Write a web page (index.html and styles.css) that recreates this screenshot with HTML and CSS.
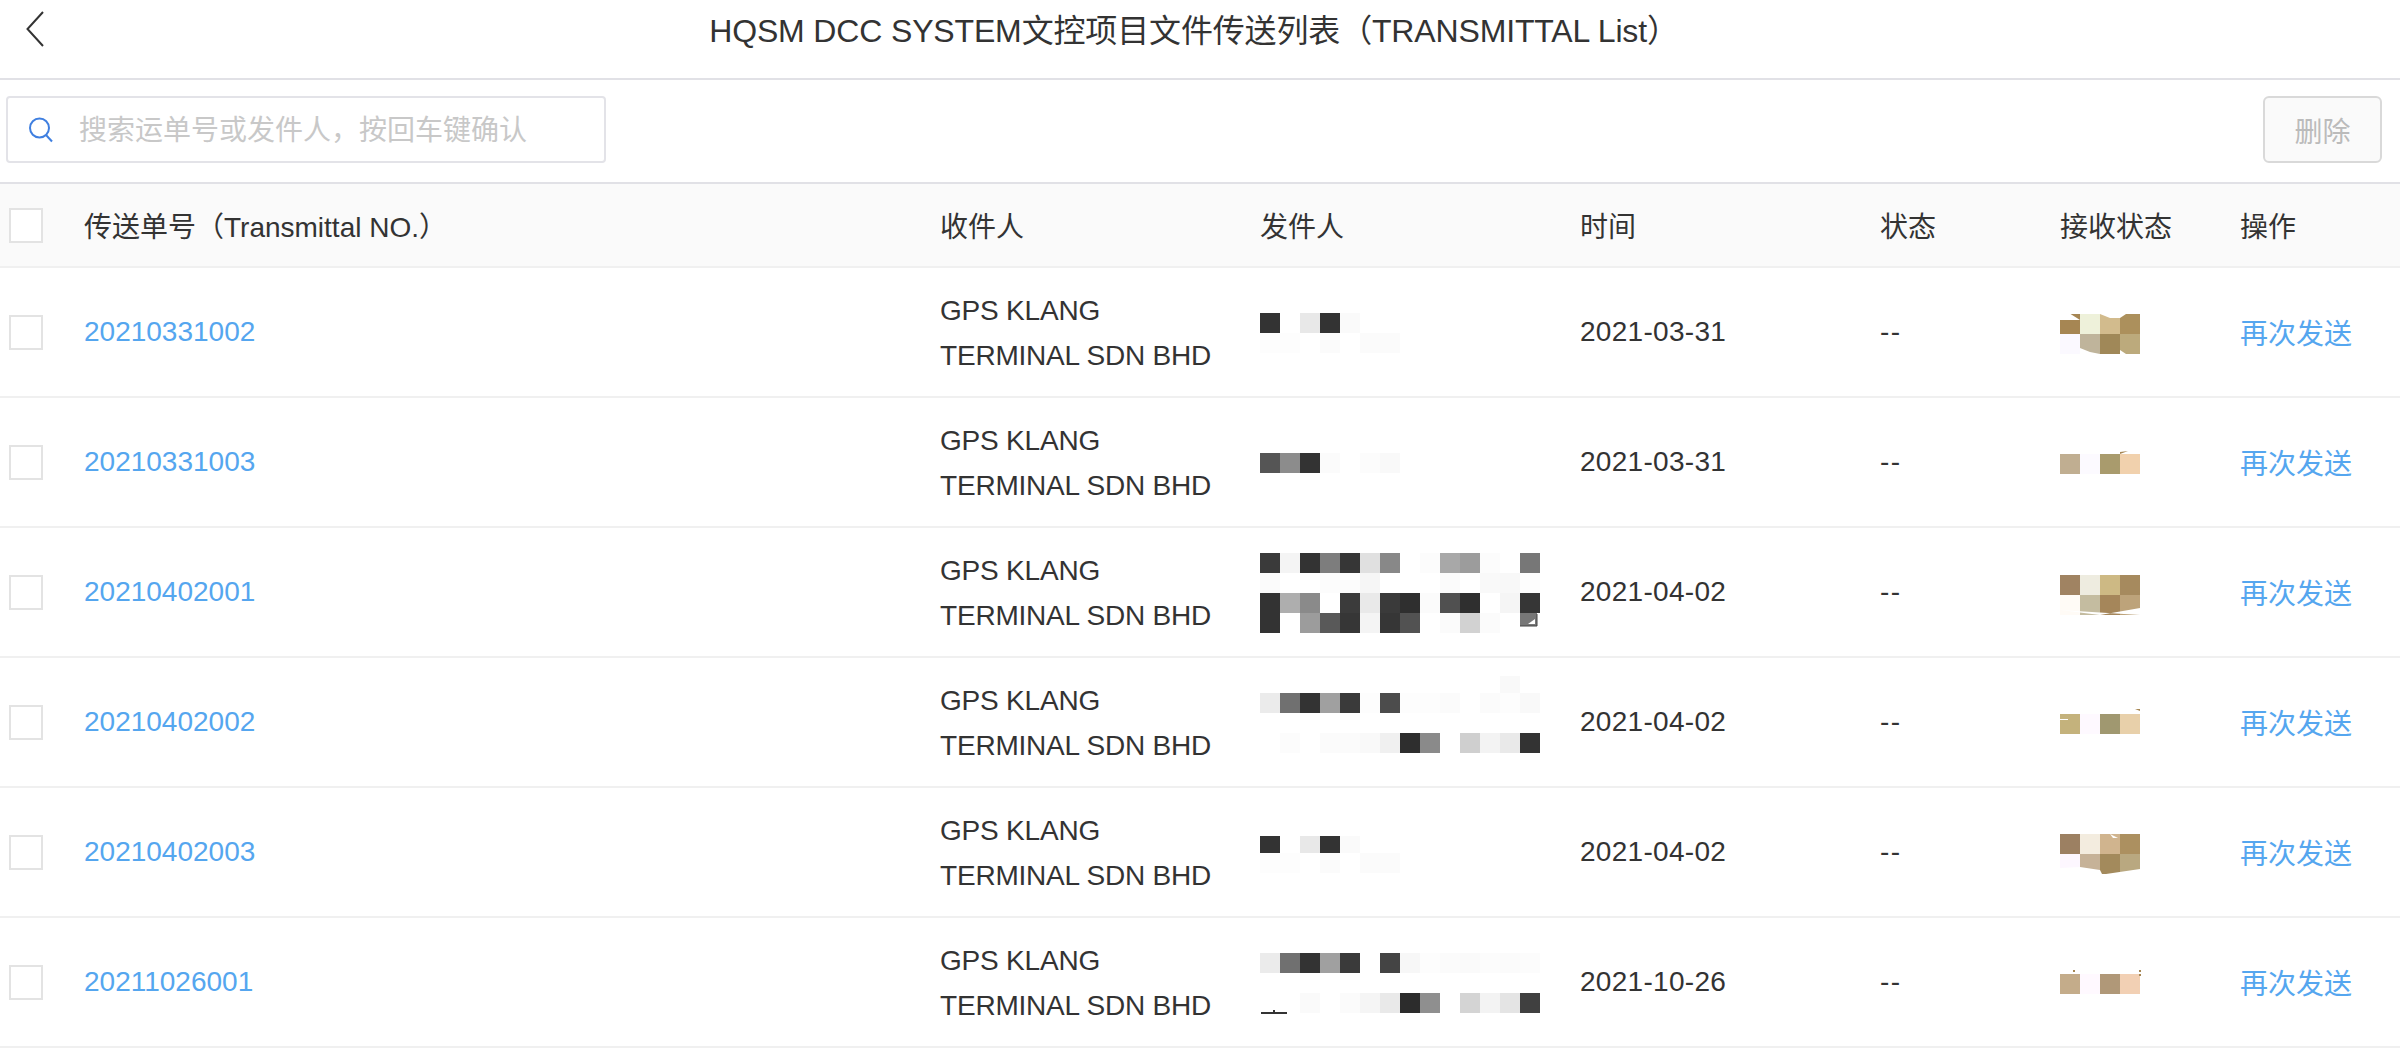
FILE: index.html
```html
<!DOCTYPE html>
<html>
<head>
    <meta charset="utf-8">
    <title>HQSM DCC SYSTEM</title>
    <link rel="stylesheet" href="styles.css">
</head>
<body>
    <div class="top-bar">
        <svg class="back-icon" width="18" height="36" viewBox="0 0 18 36"><path d="M17 1 L1.5 18 L17 35" fill="none" stroke="#333" stroke-width="2"/></svg>
        <div class="page-title">HQSM DCC SYSTEM文控项目文件传送列表（TRANSMITTAL List）</div>
    </div>
    <div class="toolbar">
        <div class="search-box">
            <svg class="search-icon" width="26" height="26" viewBox="0 0 26 26"><circle cx="11.5" cy="11" r="9.5" fill="none" stroke="#3f7fe0" stroke-width="2"/><path d="M18 18 L24 24.5" stroke="#3f7fe0" stroke-width="2" fill="none"/></svg>
            <input class="search-input" type="text" placeholder="搜索运单号或发件人，按回车键确认">
        </div>
        <button class="delete-btn">删除</button>
    </div>

    <div class="row head-row">
        <div class="check-cell"><input class="check" type="checkbox"></div>
        <div>传送单号（Transmittal NO.）</div>
        <div>收件人</div>
        <div>发件人</div>
        <div>时间</div>
        <div>状态</div>
        <div>接收状态</div>
        <div>操作</div>
    </div>

    <div class="row">
        <div class="check-cell"><input class="check" type="checkbox"></div>
        <div><a class="link">20210331002</a></div>
        <div class="receiver">GPS KLANG<br>TERMINAL SDN BHD</div>
        <div class="mosaic-cell">
            <svg class="mosaic" width="300" height="128">
                <rect class="px" x="0" y="45" fill="#333"/><rect class="px" x="40" y="45" fill="#e8e8e8"/><rect class="px" x="60" y="45" fill="#333"/><rect class="px" x="80" y="45" fill="#fafafa"/>
                <rect class="px" x="0" y="65" fill="#fdfdfd"/><rect class="px" x="20" y="65" fill="#fdfdfd"/><rect class="px" x="60" y="65" fill="#fbfbfb"/><rect class="px" x="100" y="65" fill="#fbfbfb"/><rect class="px" x="120" y="65" fill="#fbfbfb"/>
            </svg>
        </div>
        <div class="date">2021-03-31</div>
        <div class="dash">--</div>
        <div class="mosaic-cell">
            <svg class="mosaic" width="100" height="128">
                <rect class="px" x="0" y="46" fill="#a68653"/><rect class="px" x="20" y="46" fill="#eef1da"/><rect class="px" x="40" y="46" fill="#d2bb8d"/><rect class="px" x="60" y="46" fill="#ac905c"/>
                <rect class="px" x="0" y="66" fill="#fbf9ff"/><rect class="px" x="20" y="66" fill="#bfb49b"/><rect class="px" x="40" y="66" fill="#a08858"/><rect class="px" x="60" y="66" fill="#bcaa7c"/>
                <polygon points="0,45 9,45 20,52 0,52" fill="#fff"/><polygon points="40,46 50,50 60,50 66,46 40,44" fill="#fff"/><polygon points="20,80 30,84 40,86 40,87 20,87" fill="#fff"/><polygon points="60,82 66,86 60,87" fill="#fff"/>
            </svg>
        </div>
        <div><a class="link">再次发送</a></div>
    </div>

    <div class="row">
        <div class="check-cell"><input class="check" type="checkbox"></div>
        <div><a class="link">20210331003</a></div>
        <div class="receiver">GPS KLANG<br>TERMINAL SDN BHD</div>
        <div class="mosaic-cell">
            <svg class="mosaic" width="300" height="128">
                <rect class="px" x="0" y="55" fill="#555"/><rect class="px" x="20" y="55" fill="#8c8c8c"/><rect class="px" x="40" y="55" fill="#333"/><rect class="px" x="60" y="55" fill="#fbfbfb"/><rect class="px" x="100" y="55" fill="#fcfcfc"/><rect class="px" x="120" y="55" fill="#f9f9f9"/>
            </svg>
        </div>
        <div class="date">2021-03-31</div>
        <div class="dash">--</div>
        <div class="mosaic-cell">
            <svg class="mosaic" width="100" height="128">
                <rect class="px" x="0" y="56" fill="#c0ae91"/><rect class="px" x="20" y="56" fill="#fcfaff"/><rect class="px" x="40" y="56" fill="#a99b6d"/><rect class="px" x="60" y="56" fill="#f1d1ad"/>
                <polygon points="60,54 68,53 60,56" fill="#a68653"/>
            </svg>
        </div>
        <div><a class="link">再次发送</a></div>
    </div>

    <div class="row">
        <div class="check-cell"><input class="check" type="checkbox"></div>
        <div><a class="link">20210402001</a></div>
        <div class="receiver">GPS KLANG<br>TERMINAL SDN BHD</div>
        <div class="mosaic-cell">
            <svg class="mosaic" width="300" height="128">
                <rect class="px" x="0" y="25" fill="#3a3a3a"/><rect class="px" x="20" y="25" fill="#f4f4f4"/><rect class="px" x="40" y="25" fill="#333"/><rect class="px" x="60" y="25" fill="#7d7d7d"/><rect class="px" x="80" y="25" fill="#363636"/><rect class="px" x="100" y="25" fill="#e0e0e0"/><rect class="px" x="120" y="25" fill="#888"/><rect class="px" x="160" y="25" fill="#fcfcfc"/><rect class="px" x="180" y="25" fill="#a8a8a8"/><rect class="px" x="200" y="25" fill="#9c9c9c"/><rect class="px" x="220" y="25" fill="#fcfcfc"/><rect class="px" x="260" y="25" fill="#777"/>
                <rect class="px" x="0" y="45" fill="#fbfbfb"/><rect class="px" x="60" y="45" fill="#fcfcfc"/><rect class="px" x="80" y="45" fill="#fcfcfc"/><rect class="px" x="100" y="45" fill="#f6f6f6"/><rect class="px" x="180" y="45" fill="#fbfbfb"/><rect class="px" x="220" y="45" fill="#f9f9f9"/><rect class="px" x="240" y="45" fill="#f8f8f8"/><rect class="px" x="260" y="45" fill="#fdfdfd"/>
                <rect class="px" x="0" y="65" fill="#333"/><rect class="px" x="20" y="65" fill="#aeaeae"/><rect class="px" x="40" y="65" fill="#8a8a8a"/><rect class="px" x="80" y="65" fill="#3b3b3b"/><rect class="px" x="100" y="65" fill="#e9e9e9"/><rect class="px" x="120" y="65" fill="#3a3a3a"/><rect class="px" x="140" y="65" fill="#2f2f2f"/><rect class="px" x="160" y="65" fill="#fbfbfb"/><rect class="px" x="180" y="65" fill="#505050"/><rect class="px" x="200" y="65" fill="#2f2f2f"/><rect class="px" x="240" y="65" fill="#f5f5f5"/><rect class="px" x="260" y="65" fill="#363636"/>
                <rect class="px" x="0" y="85" fill="#333"/><rect class="px" x="40" y="85" fill="#9c9c9c"/><rect class="px" x="60" y="85" fill="#595959"/><rect class="px" x="80" y="85" fill="#363636"/><rect class="px" x="100" y="85" fill="#f4f4f4"/><rect class="px" x="120" y="85" fill="#363636"/><rect class="px" x="140" y="85" fill="#525252"/><rect class="px" x="180" y="85" fill="#fbfbfb"/><rect class="px" x="200" y="85" fill="#d2d2d2"/><rect class="px" x="220" y="85" fill="#fbfbfb"/>
                <rect x="260" y="85" width="17" height="13" fill="#777"/><path d="M260 98 H277 V86" fill="none" stroke="#444" stroke-width="1"/><polygon points="268,96 275,96 275,91" fill="#fff"/>
            </svg>
        </div>
        <div class="date">2021-04-02</div>
        <div class="dash">--</div>
        <div class="mosaic-cell">
            <svg class="mosaic" width="100" height="128">
                <rect class="px" x="0" y="47" fill="#a08362"/><rect class="px" x="20" y="47" fill="#eeece0"/><rect class="px" x="40" y="47" fill="#cdb984"/><rect class="px" x="60" y="47" fill="#a68a5e"/>
                <rect class="px" x="0" y="67" fill="#fffbf6"/><rect class="px" x="20" y="67" fill="#c4bca0"/><rect class="px" x="40" y="67" fill="#a5865a"/><rect class="px" x="60" y="67" fill="#bda37a"/>
                <polygon points="0,82 40,87 80,80 80,87" fill="#fff"/>
            </svg>
        </div>
        <div><a class="link">再次发送</a></div>
    </div>

    <div class="row">
        <div class="check-cell"><input class="check" type="checkbox"></div>
        <div><a class="link">20210402002</a></div>
        <div class="receiver">GPS KLANG<br>TERMINAL SDN BHD</div>
        <div class="mosaic-cell">
            <svg class="mosaic" width="300" height="128">
                <rect class="px" x="240" y="18" fill="#f9f9f9"/>
                <rect class="px" x="0" y="35" fill="#ebebeb"/><rect class="px" x="20" y="35" fill="#707070"/><rect class="px" x="40" y="35" fill="#333"/><rect class="px" x="60" y="35" fill="#a0a0a0"/><rect class="px" x="80" y="35" fill="#3a3a3a"/><rect class="px" x="100" y="35" fill="#fdfdfd"/><rect class="px" x="120" y="35" fill="#4c4c4c"/><rect class="px" x="140" y="35" fill="#fdfdfd"/><rect class="px" x="160" y="35" fill="#fdfdfd"/><rect class="px" x="180" y="35" fill="#fbfbfb"/><rect class="px" x="220" y="35" fill="#fbfbfb"/><rect class="px" x="240" y="35" fill="#fdfdfd"/><rect class="px" x="260" y="35" fill="#f9f9f9"/>
                <rect class="px" x="20" y="75" fill="#fcfcfc"/><rect class="px" x="60" y="75" fill="#fbfbfb"/><rect class="px" x="80" y="75" fill="#fbfbfb"/><rect class="px" x="100" y="75" fill="#f9f9f9"/><rect class="px" x="120" y="75" fill="#f0f0f0"/><rect class="px" x="140" y="75" fill="#2e2e2e"/><rect class="px" x="160" y="75" fill="#8a8a8a"/><rect class="px" x="200" y="75" fill="#cfcfcf"/><rect class="px" x="220" y="75" fill="#f3f3f3"/><rect class="px" x="240" y="75" fill="#e9e9e9"/><rect class="px" x="260" y="75" fill="#333"/>
            </svg>
        </div>
        <div class="date">2021-04-02</div>
        <div class="dash">--</div>
        <div class="mosaic-cell">
            <svg class="mosaic" width="100" height="128">
                <rect class="px" x="0" y="56" fill="#c4b27c"/><rect class="px" x="20" y="56" fill="#fef9ff"/><rect class="px" x="40" y="56" fill="#a09870"/><rect class="px" x="60" y="56" fill="#e8d0aa"/>
                <rect x="0" y="61" width="8" height="1" fill="#fff"/><polygon points="75,51 80,51 80,53" fill="#a68653"/>
            </svg>
        </div>
        <div><a class="link">再次发送</a></div>
    </div>

    <div class="row">
        <div class="check-cell"><input class="check" type="checkbox"></div>
        <div><a class="link">20210402003</a></div>
        <div class="receiver">GPS KLANG<br>TERMINAL SDN BHD</div>
        <div class="mosaic-cell">
            <svg class="mosaic" width="300" height="128">
                <rect x="0" y="48" width="20" height="17" fill="#333"/><rect x="40" y="48" width="20" height="17" fill="#e8e8e8"/><rect x="60" y="48" width="20" height="17" fill="#333"/><rect x="80" y="48" width="20" height="17" fill="#fafafa"/>
                <rect class="px" x="0" y="65" fill="#fdfdfd"/><rect class="px" x="20" y="65" fill="#fdfdfd"/><rect class="px" x="60" y="65" fill="#fbfbfb"/><rect class="px" x="100" y="65" fill="#fbfbfb"/><rect class="px" x="120" y="65" fill="#fbfbfb"/>
            </svg>
        </div>
        <div class="date">2021-04-02</div>
        <div class="dash">--</div>
        <div class="mosaic-cell">
            <svg class="mosaic" width="100" height="128">
                <rect class="px" x="0" y="46" fill="#9c8062"/><rect class="px" x="20" y="46" fill="#f3ecdf"/><rect class="px" x="40" y="46" fill="#d0b48e"/><rect class="px" x="60" y="46" fill="#ac9060"/>
                <rect class="px" x="0" y="66" fill="#fdf7ff"/><rect class="px" x="20" y="66" fill="#c6b298"/><rect class="px" x="40" y="66" fill="#a38a5c"/><rect class="px" x="60" y="66" fill="#b9a880"/>
                <polygon points="0,80 20,79 40,82 42,86 0,87" fill="#fff"/><polygon points="46,86 80,81 80,87" fill="#fff"/><polygon points="50,46 58,50 53,50" fill="#fff"/>
            </svg>
        </div>
        <div><a class="link">再次发送</a></div>
    </div>

    <div class="row">
        <div class="check-cell"><input class="check" type="checkbox"></div>
        <div><a class="link">20211026001</a></div>
        <div class="receiver">GPS KLANG<br>TERMINAL SDN BHD</div>
        <div class="mosaic-cell">
            <svg class="mosaic" width="300" height="128">
                <rect class="px" x="0" y="35" fill="#ebebeb"/><rect class="px" x="20" y="35" fill="#707070"/><rect class="px" x="40" y="35" fill="#333"/><rect class="px" x="60" y="35" fill="#a0a0a0"/><rect class="px" x="80" y="35" fill="#3a3a3a"/><rect class="px" x="120" y="35" fill="#444"/><rect class="px" x="140" y="35" fill="#f7f7f7"/><rect class="px" x="160" y="35" fill="#fdfdfd"/><rect class="px" x="180" y="35" fill="#fbfbfb"/><rect class="px" x="200" y="35" fill="#fafafa"/><rect class="px" x="220" y="35" fill="#fcfcfc"/><rect class="px" x="240" y="35" fill="#fbfbfb"/><rect class="px" x="260" y="35" fill="#fcfcfc"/>
                <rect class="px" x="40" y="75" fill="#fafafa"/><rect class="px" x="80" y="75" fill="#fbfbfb"/><rect class="px" x="100" y="75" fill="#f5f5f5"/><rect class="px" x="120" y="75" fill="#e9e9e9"/><rect class="px" x="140" y="75" fill="#2c2c2c"/><rect class="px" x="160" y="75" fill="#8f8f8f"/><rect class="px" x="200" y="75" fill="#d4d4d4"/><rect class="px" x="220" y="75" fill="#f3f3f3"/><rect class="px" x="240" y="75" fill="#e4e4e4"/><rect class="px" x="260" y="75" fill="#404040"/>
                <rect x="1" y="94" width="26" height="2" fill="#333"/><rect x="13" y="92" width="2" height="2" fill="#333"/>
            </svg>
        </div>
        <div class="date">2021-10-26</div>
        <div class="dash">--</div>
        <div class="mosaic-cell">
            <svg class="mosaic" width="100" height="128">
                <rect class="px" x="0" y="56" fill="#c4ac8a"/><rect class="px" x="20" y="56" fill="#fff9ff"/><rect class="px" x="40" y="56" fill="#b09878"/><rect class="px" x="60" y="56" fill="#f2d0b4"/>
                <rect x="13" y="52" width="2" height="2" fill="#a68653"/><rect x="79" y="52" width="2" height="2" fill="#a68653"/><rect x="79" y="56" width="2" height="2" fill="#a68653"/>
            </svg>
        </div>
        <div><a class="link">再次发送</a></div>
    </div>
</body>
</html>
```

FILE: styles.css
```css
html, body {
    height: 100%;
    overflow: hidden;
}

body {
    margin: 0;
    background: #fff;
    color: #333;
    font-family: "Liberation Sans", "Noto Sans CJK SC", sans-serif;
    font-size: 28px;
}

.top-bar {
    display: flex;
    align-items: center;
    height: 78px;
    padding-left: 26px;
    border-bottom: 2px solid #e1e1e6;
}

.back-icon {
    flex: none;
    margin-top: -20px;
}

.page-title {
    flex: 1;
    text-align: center;
    font-size: 32px;
    letter-spacing: -0.15px;
    padding-right: 56px;
    margin-top: -23px;
}

.toolbar {
    display: flex;
    justify-content: space-between;
    align-items: center;
    height: 67px;
    padding: 16px 18px 19px 6px;
    border-bottom: 2px solid #e1e1e6;
}

.search-box {
    display: flex;
    align-items: center;
    box-sizing: border-box;
    width: 600px;
    height: 67px;
    padding-left: 20px;
    border: 2px solid #e3e3e8;
    border-radius: 4px;
}

.search-input {
    flex: 1;
    min-width: 0;
    margin-left: 25px;
    margin-top: 2px;
    border: none;
    outline: none;
    padding: 0;
    font: inherit;
    color: #333;
}

.search-input::placeholder {
    color: #c8c8c8;
}

.delete-btn {
    box-sizing: border-box;
    width: 119px;
    height: 67px;
    padding: 0;
    border: 2px solid #d9d9d9;
    border-radius: 6px;
    background: #fafafa;
    color: #bbb;
    font: inherit;
}

.row {
    display: grid;
    grid-template-columns: 84px 856px 320px 320px 300px 180px 180px 160px;
    align-items: center;
    height: 128px;
    border-bottom: 2px solid #f0f0f0;
}

.head-row {
    height: 82px;
    background: #fafafa;
}

.check-cell {
    display: flex;
    padding-left: 9px;
}

.check {
    appearance: none;
    box-sizing: border-box;
    width: 34px;
    height: 35px;
    margin: 0;
    background: #fff;
    border: 2px solid #e3e3e3;
}

.link {
    color: #55a6ef;
}

.receiver {
    line-height: 45px;
    letter-spacing: -0.2px;
    padding-top: 1px;
}

.date {
    letter-spacing: 0.3px;
}

.dash {
    letter-spacing: 1.5px;
}

.mosaic-cell {
    height: 128px;
}

.mosaic {
    display: block;
}

.px {
    width: 20px;
    height: 20px;
}
```
